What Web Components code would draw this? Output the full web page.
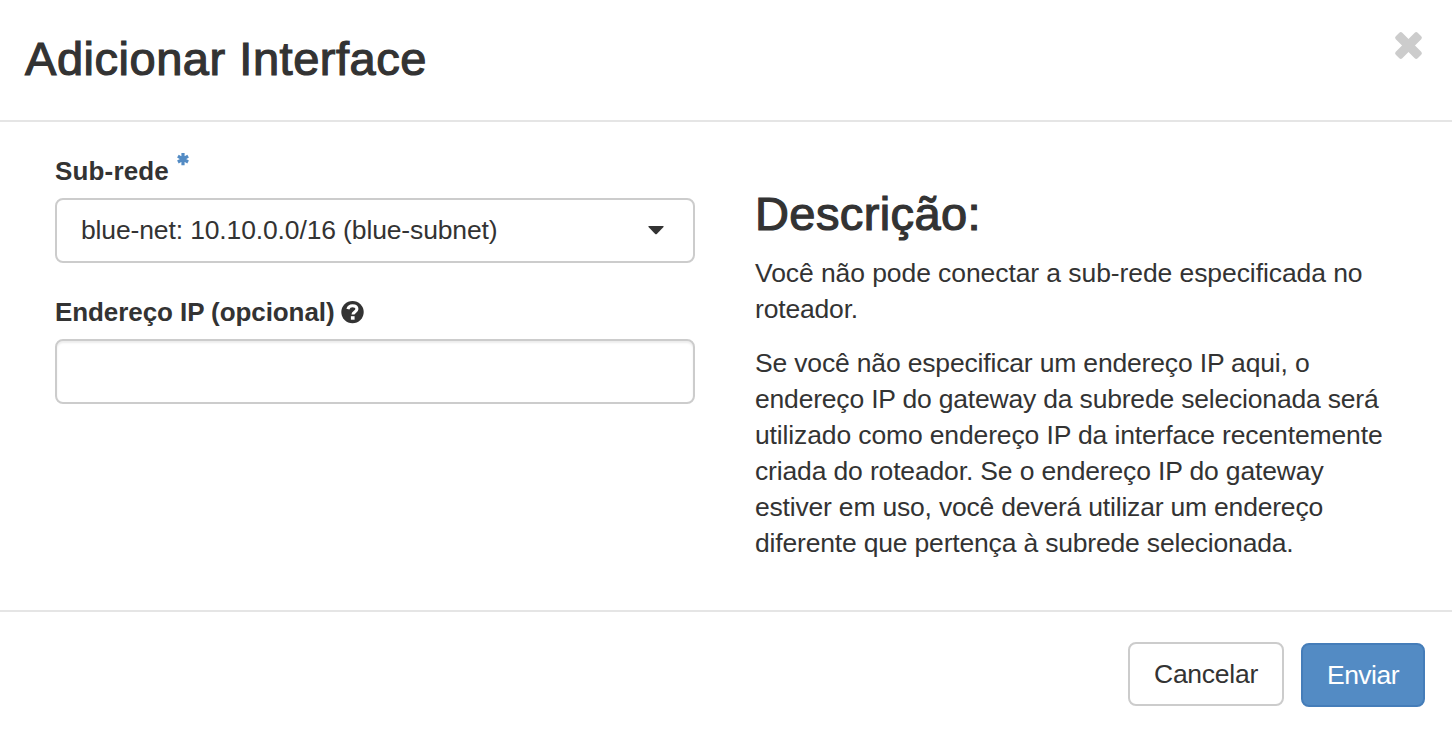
<!DOCTYPE html>
<html lang="pt-BR">
<head>
<meta charset="utf-8">
<title>Adicionar Interface</title>
<style>
html, body { margin: 0; height: 100%; background: #fff; overflow: hidden; }
body { font: 26.5px/36px "Liberation Sans", Arial, sans-serif; color: #333; }
</style>
</head>
<body>
<modal-dialog>
  <text-line slot="title" measure="402">Adicionar Interface</text-line>
  <form-field slot="form" required>
    <text-line slot="label" measure="114">Sub-rede</text-line>
    <select-box><text-line measure="416.5">blue-net: 10.10.0.0/16 (blue-subnet)</text-line></select-box>
  </form-field>
  <form-field slot="form" help>
    <text-line slot="label" measure="279.5">Endereço IP (opcional)</text-line>
    <text-input></text-input>
  </form-field>
  <help-panel slot="help">
    <text-line slot="heading" measure="226">Descrição:</text-line>
    <help-paragraph>
      <text-line measure="607.5">Você não pode conectar a sub-rede especificada no</text-line>
      <text-line measure="103">roteador.</text-line>
    </help-paragraph>
    <help-paragraph>
      <text-line measure="554.5">Se você não especificar um endereço IP aqui, o</text-line>
      <text-line measure="623.5">endereço IP do gateway da subrede selecionada será</text-line>
      <text-line measure="627.5">utilizado como endereço IP da interface recentemente</text-line>
      <text-line measure="568.5">criada do roteador. Se o endereço IP do gateway</text-line>
      <text-line measure="568">estiver em uso, você deverá utilizar um endereço</text-line>
      <text-line measure="538.5">diferente que pertença à subrede selecionada.</text-line>
    </help-paragraph>
  </help-panel>
  <action-button slot="actions"><text-line measure="104">Cancelar</text-line></action-button>
  <action-button slot="actions" primary><text-line measure="72">Enviar</text-line></action-button>
</modal-dialog>
<script>
const define = (name, html, setup) => customElements.define(name, class extends HTMLElement {
  constructor() {
    super();
    this.attachShadow({ mode: 'open' }).innerHTML = html;
  }
  connectedCallback() { if (setup) setup(this); }
});

define('modal-dialog', `
<style>
:host { display: flex; flex-direction: column; height: 734px; background: #fff; }
header { box-sizing: border-box; height: 122px; border-bottom: 2px solid #e5e5e5; padding: 31px 30px 0 25px; display: flex; justify-content: space-between; align-items: flex-start; }
h3 { margin: 0; font-size: 47px; line-height: 56px; font-weight: 400; -webkit-text-stroke: 1.2px #333; }
button { all: unset; display: block; width: 27px; height: 27px; margin-top: 1px; }
button svg { display: block; overflow: visible; }
main { flex: 1; display: grid; grid-template-columns: 640px 640px; column-gap: 60px; padding: 0 55px; }
.form { padding-top: 31px; }
footer { box-sizing: border-box; height: 124px; border-top: 2px solid #e5e5e5; padding: 30px 27px 0; display: flex; justify-content: flex-end; align-items: flex-start; gap: 17px; }
</style>
<header><h3><slot name="title"></slot></h3>
<button aria-label="Fechar"><svg width="27" height="27" viewBox="-13.5 -13.5 27 27" fill="#ccc"><rect x="-15.5" y="-4.6" width="31" height="9.2" rx="2.1" transform="rotate(45)"/><rect x="-15.5" y="-4.6" width="31" height="9.2" rx="2.1" transform="rotate(-45)"/></svg></button></header>
<main><div class="form"><slot name="form"></slot></div><slot name="help"></slot></main>
<footer><slot name="actions"></slot></footer>`);

define('form-field', `
<style>
:host { display: block; margin-bottom: 31px; }
.label { display: flex; height: 36px; margin-bottom: 9px; font-weight: 700; font-size: 26px; align-items: flex-start; }
.star, .help { display: none; flex: none; }
:host([required]) .star { display: block; margin-left: 8px; }
:host([help]) .help { display: block; margin: 6px 0 0 6.5px; }
</style>
<div class="label"><slot name="label"></slot>
<svg class="star" width="12" height="13" viewBox="0 0 12 13"><path d="M6 0v12.2M.9 3.2l10.2 5.8M11.1 3.2.9 9" stroke="#538bc4" stroke-width="3.2"/></svg>
<svg class="help" width="23" height="24" viewBox="0 -.6 23 24"><circle cx="11.5" cy="11.5" r="11.2" fill="#333"/><path d="M6.9 8.6C7.6 6 9.3 5.1 11.5 5.1c2.5 0 4.4 1.2 4.4 3.4 0 2.9-3.9 2.9-3.9 5.3" fill="none" stroke="#fff" stroke-width="3.1"/><path d="M9.9 15.6h3.7v3.5H9.9z" fill="#fff"/></svg></div>
<slot></slot>`);

define('select-box', `
<style>
:host { box-sizing: border-box; height: 65px; display: flex; align-items: center; justify-content: space-between; border: 2px solid #ccc; border-radius: 8px; padding: 0 29px 2px 24px; background: #fff; }
svg { margin-top: 2px; }
</style>
<slot></slot><svg width="16" height="9" viewBox="0 0 16 9"><path d="M.8 0h14.4q.8.4.3 1.1L8.8 8q-.8.7-1.6 0L.5 1.1Q0 .4.8 0z" fill="#333"/></svg>`);

define('text-input', `
<style>
:host { display: block; }
input { display: block; box-sizing: border-box; width: 100%; height: 65px; border: 2px solid #ccc; border-radius: 8px; padding: 0 24px; background: #fff; box-shadow: inset 0 2px 2px rgba(0,0,0,.075); font: inherit; color: inherit; outline: 0; }
</style><input type="text">`);

define('help-panel', `
<style>
:host { display: block; padding-top: 64px; }
h3 { margin: 0 0 13px; font-size: 47px; line-height: 56px; font-weight: 400; -webkit-text-stroke: 1.2px #333; }
</style><h3><slot name="heading"></slot></h3><slot></slot>`);

define('help-paragraph', `
<style>:host { display: block; margin-bottom: 18px; }</style><slot></slot>`);

define('action-button', `
<style>
:host { display: block; }
button { all: unset; box-sizing: border-box; display: block; height: 64px; line-height: 56px; padding: 0 24px; border: 2px solid #ccc; border-radius: 8px; background: #fff; color: #333; }
:host([primary]) { margin-top: 1px; }
:host([primary]) button { background: #538bc4; border-color: #457db9; color: #fff; }
</style><button><slot></slot></button>`);

/* A single line of text whose tracking is set so that it fills its measure. */
define('text-line', `
<style>:host { display: block; white-space: nowrap; } span { display: inline-block; vertical-align: top; }</style><span><slot></slot></span>`,
el => {
  const span = el.shadowRoot.querySelector('span');
  const measure = parseFloat(el.getAttribute('measure'));
  const gap = (measure - span.getBoundingClientRect().width) / el.textContent.length;
  span.style.letterSpacing = gap + 'px';
});
</script>
</body>
</html>
